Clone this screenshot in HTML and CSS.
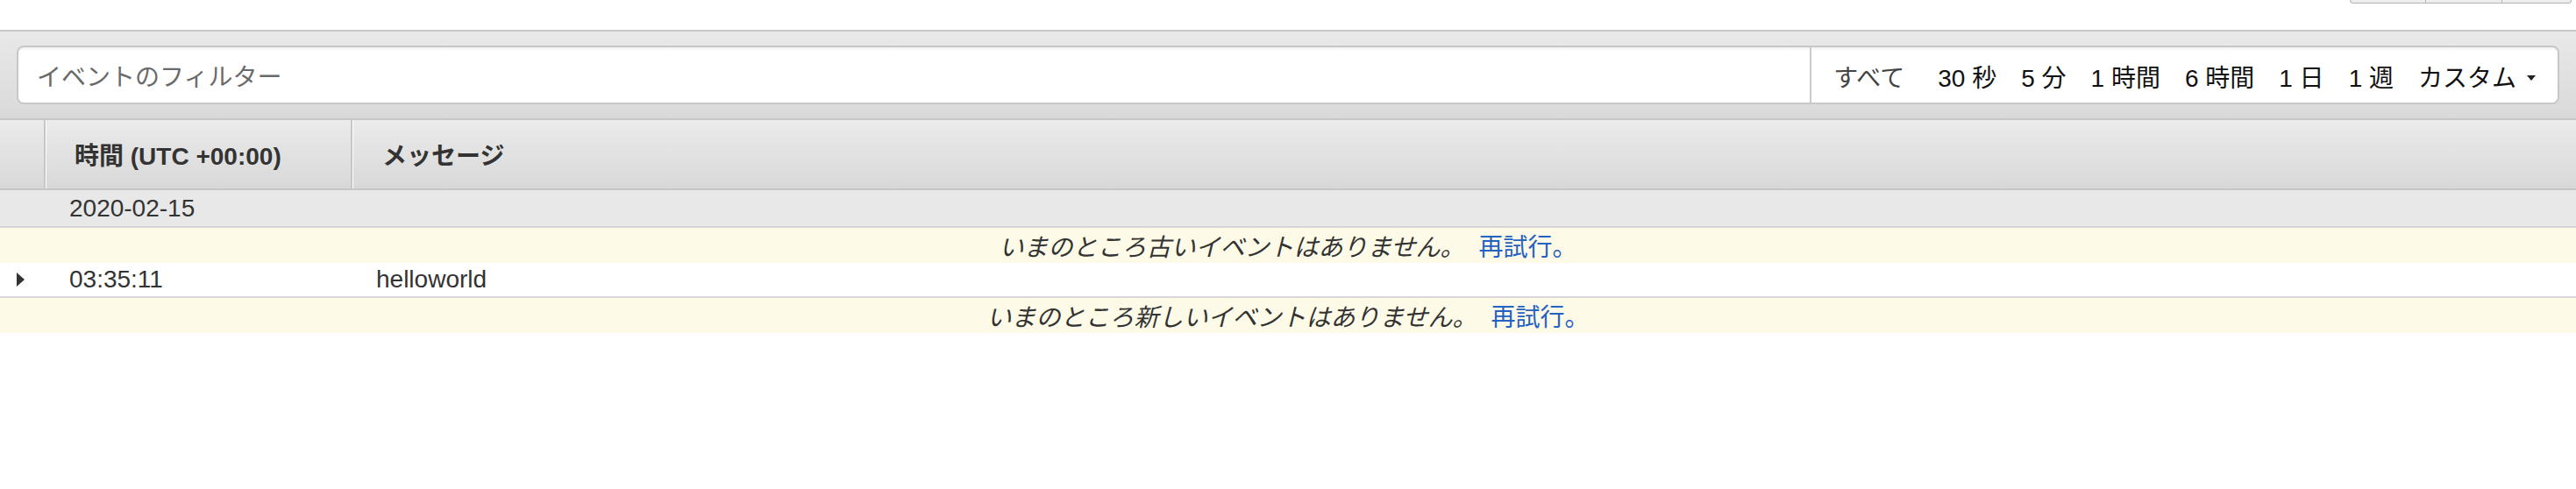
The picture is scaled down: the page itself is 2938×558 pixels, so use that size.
FILE: index.html
```html
<!DOCTYPE html>
<html lang="ja">
<head>
<meta charset="utf-8">
<title>ログイベント</title>
<link rel="stylesheet" href="styles.css">
</head>
<body>
<div class="topbar">
  <div class="top-btns"><span class="tb tb1"></span><span class="tb tb2"></span><span class="tb tb3"></span></div>
</div>
<div class="toolbar">
  <div class="filter">
    <div class="filter-field"><span class="placeholder">イベントのフィルター</span></div>
    <div class="ranges">
      <span class="range all">すべて</span>
      <span class="range">30 秒</span>
      <span class="range">5 分</span>
      <span class="range">1 時間</span>
      <span class="range">6 時間</span>
      <span class="range">1 日</span>
      <span class="range">1 週</span>
      <span class="range custom">カスタム<span class="caret"></span></span>
    </div>
  </div>
</div>
<div class="table">
  <div class="row head">
    <div class="c0"></div>
    <div class="c1">時間 (UTC +00:00)</div>
    <div class="c2">メッセージ</div>
  </div>
  <div class="row date">
    <div class="c0"></div>
    <div class="c1">2020-02-15</div>
    <div class="c2"></div>
  </div>
  <div class="notice">いまのところ古いイベントはありません。<a class="retry" href="#">再試行。</a></div>
  <div class="row event">
    <div class="c0"><span class="expand"></span></div>
    <div class="c1">03:35:11</div>
    <div class="c2">helloworld</div>
  </div>
  <div class="notice">いまのところ新しいイベントはありません。<a class="retry" href="#">再試行。</a></div>
</div>
</body>
</html>
```

FILE: styles.css
```css
* { box-sizing: border-box; }
html, body { margin: 0; padding: 0; background: #fff; }
body {
  font-family: "Liberation Sans", "Noto Sans CJK JP", sans-serif;
  font-size: 28px;
  color: #333;
  width: 2938px;
}

.topbar {
  height: 34px;
  display: flex;
  justify-content: flex-end;
  align-items: flex-start;
  padding-right: 5px;
}
.top-btns {
  display: flex;
  height: 4px;
  border: 1px solid #b4b4b4;
  border-top: none;
  border-radius: 0 0 6px 6px;
  background: #eeeeee;
  overflow: hidden;
}
.tb { display: block; height: 100%; }
.tb1 { width: 85px; }
.tb2 { width: 87px; border-left: 1px solid #b4b4b4; }
.tb3 { width: 79px; border-left: 1px solid #b4b4b4; }

.toolbar {
  border-top: 2px solid #c9c9c9;
  border-bottom: 2px solid #c6c6c6;
  background: linear-gradient(#e9e9e9, #d9d9d9);
  padding: 16px 19px;
}
.filter {
  display: flex;
  height: 67px;
  background: #fff;
  border: 2px solid #c8c8c8;
  border-radius: 8px;
  box-shadow: inset 0 2px 3px rgba(0,0,0,0.06);
}
.filter-field {
  flex: 1;
  display: flex;
  align-items: center;
  padding-left: 21px;
  border-right: 2px solid #cbcbcb;
}
.placeholder { color: #6a6a6a; }
.ranges {
  display: flex;
  align-items: center;
  padding: 3px 11px 0 11px;
  color: #111;
}
.range { padding: 0 14px; white-space: pre; }
.range.all { color: #444; margin-right: 10px; }
.custom { display: flex; align-items: center; }
.caret {
  display: inline-block;
  width: 0; height: 0;
  margin-left: 12px;
  margin-top: 4px;
  border-left: 5px solid transparent;
  border-right: 5px solid transparent;
  border-top: 6px solid #222;
}

.table { width: 100%; }
.row {
  display: grid;
  grid-template-columns: 50px 350px 1fr;
}
.head {
  height: 80px;
  background: linear-gradient(#ebebeb, #d8d8d8);
  border-bottom: 2px solid #c6c6c6;
  font-weight: bold;
  color: #333;
}
.head > div { display: flex; align-items: center; }
.head .c1 {
  border-left: 2px solid #c6c6c6;
  box-shadow: inset 1px 0 0 #fff;
  padding-left: 33px;
}
.head .c2 {
  border-left: 2px solid #c6c6c6;
  box-shadow: inset 1px 0 0 #fff;
  padding-left: 34px;
}
.date {
  height: 43px;
  background: #e8e8e8;
  border-bottom: 2px solid #d6d6d6;
}
.date > div, .event > div { display: flex; align-items: center; }
.date .c1, .event .c1 { padding-left: 29px; }
.event .c2 { padding-left: 29px; }
.event {
  height: 40px;
  background: #fff;
  border-bottom: 2px solid #d8d8d8;
}
.event .c0 { padding-left: 19px; }
.expand {
  display: block;
  width: 0; height: 0;
  border-top: 8px solid transparent;
  border-bottom: 8px solid transparent;
  border-left: 9px solid #333;
}
.notice {
  height: 40px;
  background: #fdfbe7;
  display: flex;
  align-items: center;
  justify-content: center;
  font-style: italic;
  color: #333;
  white-space: pre;
}
.retry {
  font-style: normal;
  color: #2461c2;
  text-decoration: none;
  margin-left: 16px;
}
```
